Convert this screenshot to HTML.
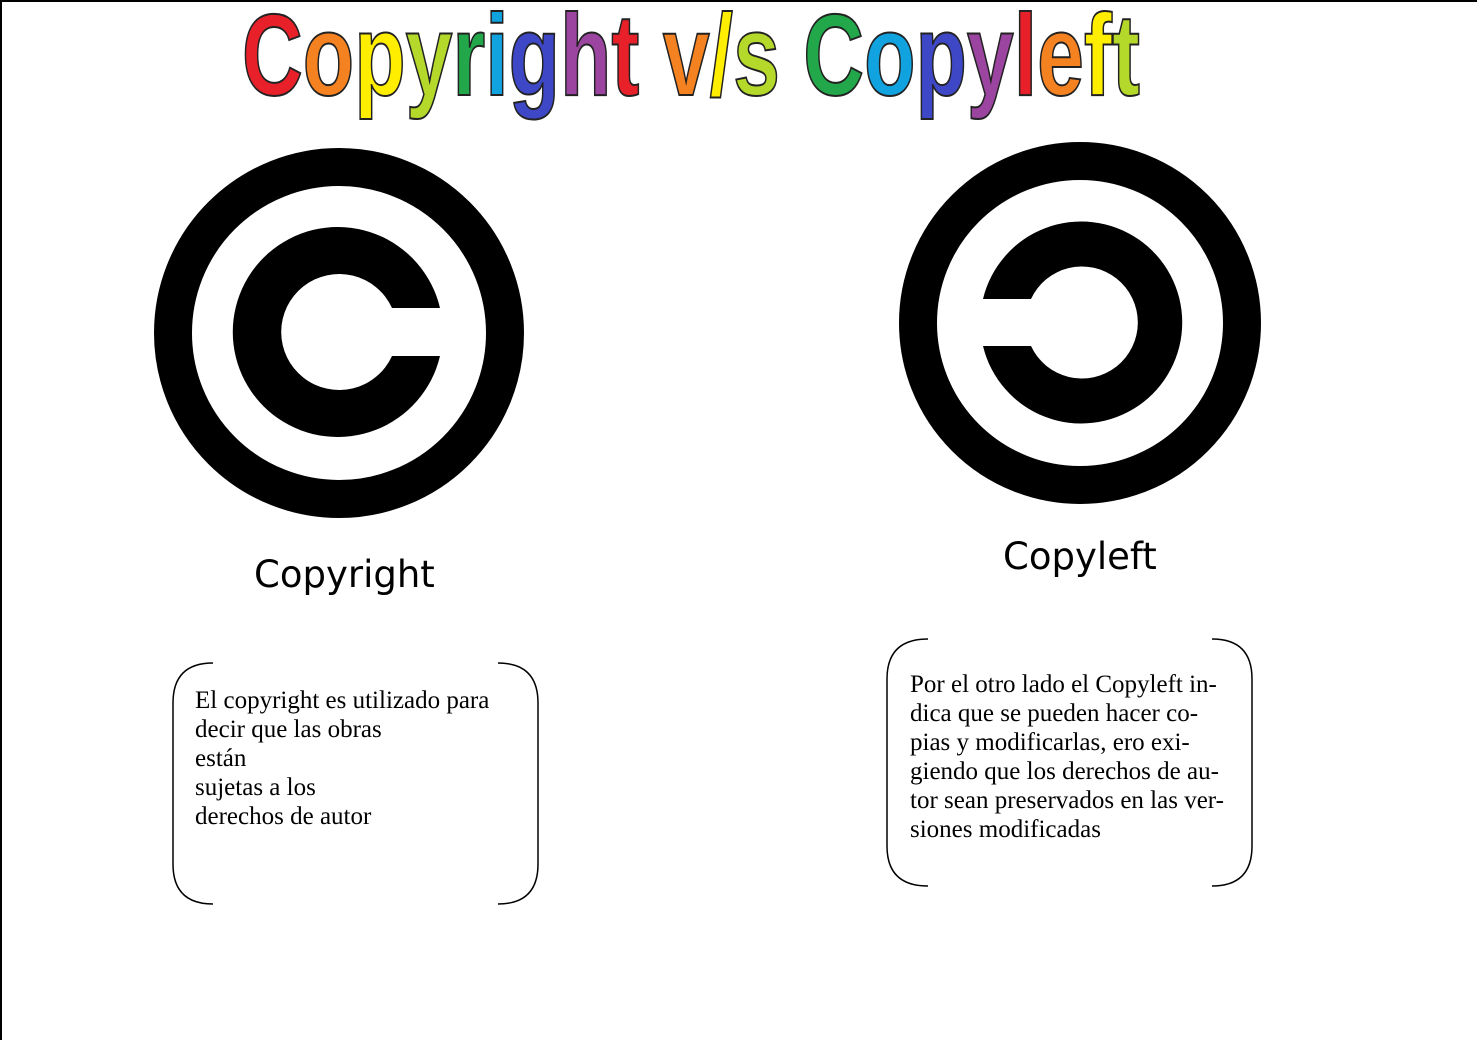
<!DOCTYPE html>
<html><head><style>
body{margin:0;width:1477px;height:1040px;background:#fff;position:relative;overflow:hidden}
.t{position:absolute;font-family:"Liberation Serif",serif;font-size:25px;line-height:29px;color:#000}
.l{position:absolute;font-family:"DejaVu Sans","Liberation Sans",sans-serif;font-size:37px;color:#000}
</style></head><body>
<svg width="1477" height="1040" style="position:absolute;left:0;top:0">
<line x1="0" y1="1" x2="1477" y2="1" stroke="#000" stroke-width="2"/>
<line x1="1" y1="0" x2="1" y2="1040" stroke="#000" stroke-width="2"/>
<text x="242" y="95" textLength="898" lengthAdjust="spacingAndGlyphs" font-family="Liberation Sans" font-weight="bold" font-size="116" stroke="#222" stroke-width="2"><tspan fill="#e8202a">C</tspan><tspan fill="#f58220">o</tspan><tspan fill="#ffee00">p</tspan><tspan fill="#b5d92a">y</tspan><tspan fill="#22a84a">r</tspan><tspan fill="#11a3e0">i</tspan><tspan fill="#3e48c6">g</tspan><tspan fill="#9c45a0">h</tspan><tspan fill="#e8202a">t</tspan><tspan> </tspan><tspan fill="#f58220">v</tspan><tspan fill="#ffee00">/</tspan><tspan fill="#b5d92a">s</tspan><tspan> </tspan><tspan fill="#22a84a">C</tspan><tspan fill="#11a3e0">o</tspan><tspan fill="#3e48c6">p</tspan><tspan fill="#9c45a0">y</tspan><tspan fill="#e8202a">l</tspan><tspan fill="#f58220">e</tspan><tspan fill="#ffee00">f</tspan><tspan fill="#b5d92a">t</tspan></text>
<circle cx="339" cy="333" r="166" fill="none" stroke="#000" stroke-width="38"/>
<path d="M440 308 A105 105 0 1 0 440 356 L392 356 A58 58 0 1 1 392 308 Z" fill="#000"/>
<circle cx="1080" cy="323" r="162" fill="none" stroke="#000" stroke-width="38"/>
<path d="M983 299 A101 101 0 1 1 983 346 L1031 346 A56 56 0 1 0 1031 299 Z" fill="#000"/>
<g fill="none" stroke="#000" stroke-width="1.5">
<path d="M213 663 Q173 663 173 703 L173 864 Q173 904 213 904"/>
<path d="M498 663 Q538 663 538 703 L538 864 Q538 904 498 904"/>
<path d="M928 639 Q887 639 887 679 L887 846 Q887 886 928 886"/>
<path d="M1212 639 Q1252 639 1252 679 L1252 846 Q1252 886 1212 886"/>
</g>
</svg>
<div class="l" style="left:254px;top:553px">Copyright</div>
<div class="l" style="left:1003px;top:535px">Copyleft</div>
<div class="t" style="left:195px;top:686px">El copyright es utilizado para<br>decir que las obras<br>están<br>sujetas a los<br>derechos de autor</div>
<div class="t" style="left:910px;top:670px">Por el otro lado el Copyleft in-<br>dica que se pueden hacer co-<br>pias y modificarlas, ero exi-<br>giendo que los derechos de au-<br>tor sean preservados en las ver-<br>siones modificadas</div>
</body></html>
